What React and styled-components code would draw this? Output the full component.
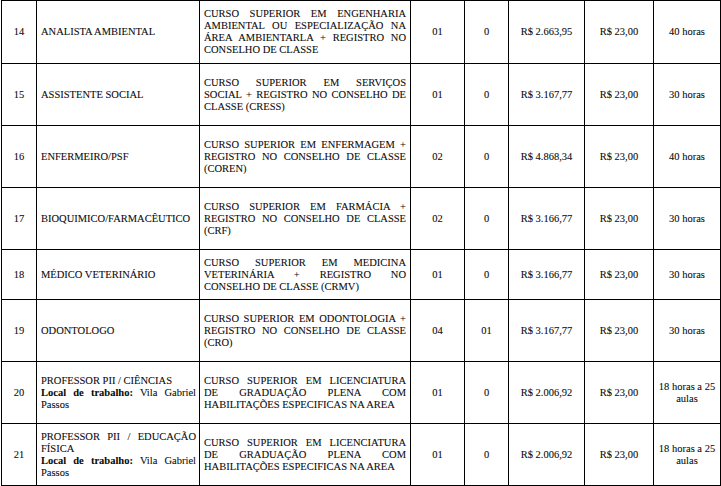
import React from "react";
import styled, { createGlobalStyle } from "styled-components";

const GlobalStyle = createGlobalStyle`
  html, body {
    margin: 0;
    padding: 0;
    background: #fff;
  }
  body {
    font-family: "Liberation Serif", "Times New Roman", serif;
    color: #000;
  }
`;

const rows = [
  {
    num: "14",
    height: 63,
    role: [{ text: "ANALISTA AMBIENTAL" }],
    course: [
      "CURSO SUPERIOR EM ENGENHARIA",
      "AMBIENTAL OU ESPECIALIZAÇÃO NA",
      "ÁREA AMBIENTARLA + REGISTRO NO",
      "CONSELHO DE CLASSE",
    ],
    vacancies: "01",
    reserved: "0",
    salary: "R$ 2.663,95",
    fee: "R$ 23,00",
    hours: ["40 horas"],
  },
  {
    num: "15",
    height: 62,
    role: [{ text: "ASSISTENTE SOCIAL" }],
    course: [
      "CURSO SUPERIOR EM SERVIÇOS",
      "SOCIAL + REGISTRO NO CONSELHO DE",
      "CLASSE (CRESS)",
    ],
    vacancies: "01",
    reserved: "0",
    salary: "R$ 3.167,77",
    fee: "R$ 23,00",
    hours: ["30 horas"],
  },
  {
    num: "16",
    height: 62,
    role: [{ text: "ENFERMEIRO/PSF" }],
    course: [
      "CURSO SUPERIOR EM ENFERMAGEM +",
      "REGISTRO NO CONSELHO DE CLASSE",
      "(COREN)",
    ],
    vacancies: "02",
    reserved: "0",
    salary: "R$ 4.868,34",
    fee: "R$ 23,00",
    hours: ["40 horas"],
  },
  {
    num: "17",
    height: 62,
    role: [{ text: "BIOQUIMICO/FARMACÊUTICO" }],
    course: [
      "CURSO SUPERIOR EM FARMÁCIA +",
      "REGISTRO NO CONSELHO DE CLASSE",
      "(CRF)",
    ],
    vacancies: "02",
    reserved: "0",
    salary: "R$ 3.166,77",
    fee: "R$ 23,00",
    hours: ["30 horas"],
  },
  {
    num: "18",
    height: 50,
    role: [{ text: "MÉDICO VETERINÁRIO" }],
    course: [
      "CURSO SUPERIOR EM MEDICINA",
      "VETERINÁRIA + REGISTRO NO",
      "CONSELHO DE CLASSE (CRMV)",
    ],
    vacancies: "01",
    reserved: "0",
    salary: "R$ 3.166,77",
    fee: "R$ 23,00",
    hours: ["30 horas"],
  },
  {
    num: "19",
    height: 62,
    role: [{ text: "ODONTOLOGO" }],
    course: [
      "CURSO SUPERIOR EM ODONTOLOGIA +",
      "REGISTRO NO CONSELHO DE CLASSE",
      "(CRO)",
    ],
    vacancies: "04",
    reserved: "01",
    salary: "R$ 3.167,77",
    fee: "R$ 23,00",
    hours: ["30 horas"],
  },
  {
    num: "20",
    height: 62,
    role: [
      { text: "PROFESSOR PII / CIÊNCIAS", last: true },
      { bold: "Local de trabalho:", text: " Vila Gabriel" },
      { text: "Passos", last: true },
    ],
    course: [
      "CURSO SUPERIOR EM LICENCIATURA",
      "DE GRADUAÇÃO PLENA COM",
      "HABILITAÇÕES ESPECIFICAS NA AREA",
    ],
    vacancies: "01",
    reserved: "0",
    salary: "R$ 2.006,92",
    fee: "R$ 23,00",
    hours: ["18 horas a 25", "aulas"],
  },
  {
    num: "21",
    height: 62,
    role: [
      { text: "PROFESSOR PII / EDUCAÇÃO" },
      { text: "FÍSICA", last: true },
      { bold: "Local de trabalho:", text: " Vila Gabriel" },
      { text: "Passos", last: true },
    ],
    course: [
      "CURSO SUPERIOR EM LICENCIATURA",
      "DE GRADUAÇÃO PLENA COM",
      "HABILITAÇÕES ESPECIFICAS NA AREA",
    ],
    vacancies: "01",
    reserved: "0",
    salary: "R$ 2.006,92",
    fee: "R$ 23,00",
    hours: ["18 horas a 25", "aulas"],
  },
];

// column widths measured between the ruling lines
const widths = [35, 163, 211, 54, 44, 76, 69, 67];

const App = () => {
  return (
    <>
      <GlobalStyle />
      <Table>
        <colgroup>
          {widths.map((w, i) => (
            <col key={i} style={{ width: w }} />
          ))}
        </colgroup>
        <tbody>
          {rows.map((row) => (
            <Row key={row.num} $height={row.height}>
              <Cell $align="center">{row.num}</Cell>
              <Cell $pad="0 3px 0 4px">
                {row.role.length === 1 ? (
                  row.role[0].text
                ) : (
                  row.role.map((line, i) => (
                    <Line key={i} $last={line.last || i === row.role.length - 1}>
                      {line.bold && <b>{line.bold}</b>}
                      {line.text}
                    </Line>
                  ))
                )}
              </Cell>
              <Cell $pad="0 4px">
                {row.course.map((line, i) => (
                  <Line key={i} $last={i === row.course.length - 1}>
                    {line}
                  </Line>
                ))}
              </Cell>
              <Cell $align="center">{row.vacancies}</Cell>
              <Cell $align="center">{row.reserved}</Cell>
              <Cell $align="center">{row.salary}</Cell>
              <Cell $align="center">{row.fee}</Cell>
              <Cell $align="center">
                {row.hours.map((h, i) => (
                  <HourLine key={i}>{h}</HourLine>
                ))}
              </Cell>
            </Row>
          ))}
        </tbody>
      </Table>
    </>
  );
};

const Table = styled.table`
  margin-left: 1px;
  width: 720px;
  table-layout: fixed;
  border-collapse: collapse;
  font-family: "Liberation Serif", "Times New Roman", serif;
  font-size: 10.5px;
  line-height: 12px;
  color: #0a0a0a;
  -webkit-text-stroke: 0.08px #0a0a0a;
`;

const Row = styled.tr`
  height: ${(p) => p.$height}px;
`;

const Cell = styled.td`
  border: 1.5px solid #000;
  padding: ${(p) => p.$pad || "0 2px"};
  text-align: ${(p) => p.$align || "left"};
  vertical-align: middle;
  overflow: hidden;

  b {
    font-weight: 700;
  }
`;

const Line = styled.div`
  text-align: justify;
  text-align-last: ${(p) => (p.$last ? "left" : "justify")};
  white-space: nowrap;
`;

const HourLine = styled.div`
  white-space: nowrap;
`;

export default App;
